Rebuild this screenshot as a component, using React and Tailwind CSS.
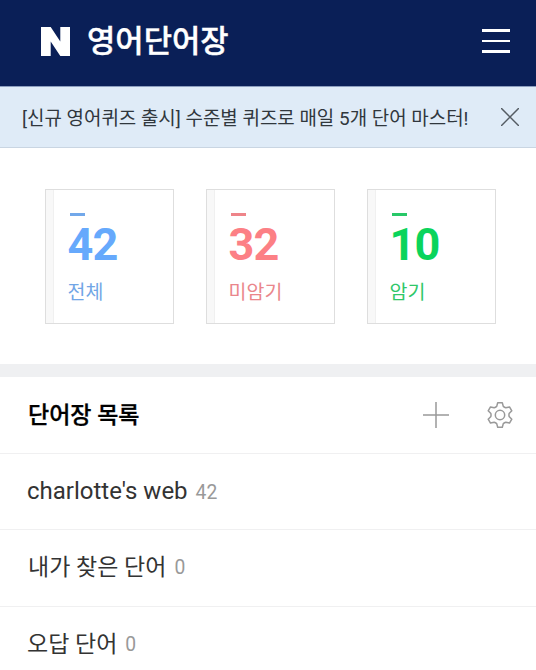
const books = [
  { count: 42, label: '전체', num: 'text-[#66a9fc]', text: 'text-[#71a6e6]', bar: 'bg-[#72a8ea]' },
  { count: 32, label: '미암기', num: 'text-[#fc8085]', text: 'text-[#ea868b]', bar: 'bg-[#ee8489]' },
  { count: 10, label: '암기', num: 'text-[#0ad45c]', text: 'text-[#2fc769]', bar: 'bg-[#28c868]' },
];

const lists = [
  { name: "charlotte's web", count: 42, style: 'text-[24px]' },
  { name: '내가 찾은 단어', count: 0, style: 'text-[23px] ml-px relative top-px' },
  { name: '오답 단어', count: 0, style: 'text-[23px] relative top-px' },
];

function Header() {
  return (
    <header className="flex h-[86px] items-center bg-[#0a1f57] pr-[26px] pl-[41px] text-white">
      <svg className="mt-[-4px] block" width="29" height="29" viewBox="0 0 29 29" fill="currentColor">
        <path d="M0 0h9.7l9.6 14.4V0H29v29h-9.7L9.7 14.6V29H0z" />
      </svg>
      <h1 className="mt-[-2px] ml-[17px] text-[30.8px] leading-[46px] font-medium whitespace-nowrap [-webkit-text-stroke:0.4px_white]">영어단어장</h1>
      <button className="mt-[-4px] ml-auto flex w-7 flex-col gap-2" aria-label="메뉴">
        <span className="h-[2.5px] bg-white" />
        <span className="h-[2.5px] bg-white" />
        <span className="h-[2.5px] bg-white" />
      </button>
    </header>
  );
}

function Notice() {
  return (
    <div className="flex h-[62px] items-center justify-between border-t border-b border-t-[#8c9ebf] border-b-[#c9d5e2] bg-[#dfebf7] pr-[17px] pl-[22px] text-[#30373d]">
      <p className="mt-[3px] text-[18.95px] leading-7 whitespace-nowrap">[신규 영어퀴즈 출시] 수준별 퀴즈로 매일 5개 단어 마스터!</p>
      <svg className="mt-[-1px]" width="18" height="18" viewBox="0 0 18 18" stroke="#555c63" strokeWidth="1.5">
        <path d="M0 0l18 18M18 0L0 18" />
      </svg>
    </div>
  );
}

function Book({ count, label, num, text, bar }) {
  return (
    <div className="flex h-[135px] w-[129px] border-[1.5px] border-[#dedede]">
      <div className="w-2 border-r border-[#f0f0f0] bg-[#f8f8f8]" />
      <div className="flex flex-col pt-[23px] pl-[14px]">
        <span className={`ml-[2px] h-[3px] w-[15px] ${bar}`} />
        <strong className={`mt-[5px] text-[45px] leading-[48px] font-bold tracking-[-1px] ${num}`}>{count}</strong>
        <span className={`mt-[10px] text-[19.5px] leading-7 ${text}`}>{label}</span>
      </div>
    </div>
  );
}

function ListHeader() {
  return (
    <div className="flex h-[77px] items-center border-b border-[#f0f0f1] pr-[22px] pl-[28px]">
      <h2 className="mt-[2px] mr-auto text-[23px] leading-8 font-medium text-black [-webkit-text-stroke:0.3px_black]">단어장 목록</h2>
      <svg className="mt-[-1px] mr-[37px]" width="26" height="26" viewBox="0 0 26 26" stroke="#999" strokeWidth="1.5">
        <path d="M13 0v26M0 13h26" />
      </svg>
      <svg className="mt-[-1px]" width="28" height="28" viewBox="-14 -14 28 28" fill="none" stroke="#999" strokeWidth="1.5" strokeLinejoin="round">
        <path d="M-2.3 -12.3H2.3L3.3 -8.6Q4.5 -7.5 5.8 -7.2L9.5 -8.1L11.8 -4.2L9.1 -1.4Q8.8 0 9.1 1.4L11.8 4.2L9.5 8.1L5.8 7.2Q4.5 7.5 3.3 8.6L2.3 12.3H-2.3L-3.3 8.6Q-4.5 7.5 -5.8 7.2L-9.5 8.1L-11.8 4.2L-9.1 1.4Q-8.8 0 -9.1 -1.4L-11.8 -4.2L-9.5 -8.1L-5.8 -7.2Q-4.5 -7.5 -3.3 -8.6Z" />
        <circle r="4.7" />
      </svg>
    </div>
  );
}

export default function App() {
  return (
    <div className="h-[670px] w-[536px] overflow-hidden bg-white font-['Roboto','Noto_Sans_CJK_KR',sans-serif]">
      <Header />
      <Notice />
      <section className="flex h-[216px] gap-8 pt-[40.5px] pl-[44.6px]">
        {books.map((b) => <Book key={b.label} {...b} />)}
      </section>
      <div className="h-[13px] bg-[#eff0f2]" />
      <ListHeader />
      <ul>
        {lists.map((l) => (
          <li key={l.name} className="flex h-[76.3px] items-baseline border-b border-[#f0f0f1] pt-[21px] pl-[27px]">
            <span className={`${l.style} leading-8 whitespace-nowrap text-[#333]`}>{l.name}</span>
            <span className="ml-2 text-[19.3px] leading-8 text-[#999]">{l.count}</span>
          </li>
        ))}
      </ul>
    </div>
  );
}
